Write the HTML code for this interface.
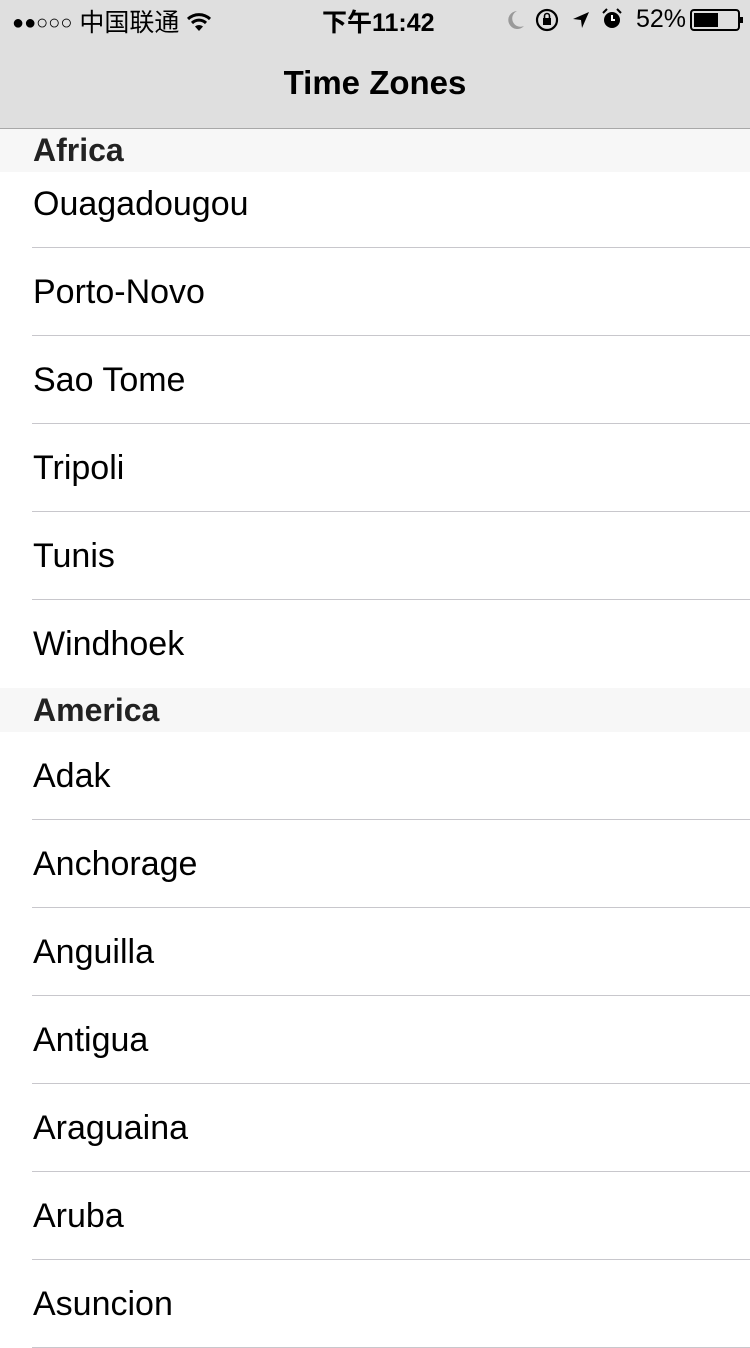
<!DOCTYPE html>
<html><head><meta charset="utf-8"><style>
*{margin:0;padding:0;box-sizing:border-box}
body{width:750px;height:1334px;overflow:hidden;background:#fff;font-family:"Liberation Sans","Noto Sans CJK SC",sans-serif;position:relative}
.nav{position:absolute;left:0;top:0;width:750px;height:129px;background:#dfdfdf;border-bottom:1px solid #a8a8a8}
.sb{position:absolute;top:3px;font-size:25px;color:#000;white-space:nowrap}
.ic{position:absolute}
.title{position:absolute;top:64px;width:750px;text-align:center;font-size:33px;font-weight:bold;color:#000}
.hdr{position:absolute;left:0;width:750px;height:44px;background:#f7f7f7;font-size:32px;font-weight:bold;color:#222;padding-left:33px;line-height:44px}
.row{position:absolute;left:0;width:750px;height:88px;font-size:34px;color:#000;padding-left:33px;line-height:88px}
.row.s::after{content:"";position:absolute;left:32px;right:0;bottom:0;height:1px;background:#c8c7cc}
</style></head><body>
<div class="row s" style="top:160px">Ouagadougou</div>
<div class="row s" style="top:248px">Porto-Novo</div>
<div class="row s" style="top:336px">Sao Tome</div>
<div class="row s" style="top:424px">Tripoli</div>
<div class="row s" style="top:512px">Tunis</div>
<div class="row" style="top:600px">Windhoek</div>
<div class="hdr" style="top:688px">America</div>
<div class="row s" style="top:732px">Adak</div>
<div class="row s" style="top:820px">Anchorage</div>
<div class="row s" style="top:908px">Anguilla</div>
<div class="row s" style="top:996px">Antigua</div>
<div class="row s" style="top:1084px">Araguaina</div>
<div class="row s" style="top:1172px">Aruba</div>
<div class="row s" style="top:1260px">Asuncion</div>
<div class="hdr" style="top:129px;height:43px;line-height:43px">Africa</div>
<div class="nav">
<div class="sb" style="left:12px"><span style="font-size:20px;vertical-align:2px">●●○○○</span> 中国联通
<svg width="26" height="20" viewBox="0 0 26 20" style="vertical-align:-1px"><path d="M2 7 A16 16 0 0 1 24 7" stroke="#000" stroke-width="3" fill="none"/><path d="M6 11 A10 10 0 0 1 20 11" stroke="#000" stroke-width="3" fill="none"/><path d="M13 19 L9 14.5 A6 6 0 0 1 17 14.5 Z" fill="#000"/></svg></div>
<div class="sb" style="left:322px;font-weight:bold;">下午11:42</div>
<svg class="ic" style="left:505px;top:9px" width="20" height="22" viewBox="0 0 20 22"><path d="M12 2 A9 9 0 1 0 19 17 A8 8 0 0 1 12 2Z" fill="#999"/></svg>
<svg class="ic" style="left:535px;top:8px" width="24" height="24" viewBox="0 0 24 24"><circle cx="12" cy="12" r="10" stroke="#000" stroke-width="2.2" fill="none"/><rect x="8" y="10" width="8" height="7" fill="#000"/><path d="M9.5 10 V8 a2.5 2.5 0 0 1 5 0 V10" stroke="#000" stroke-width="1.6" fill="none"/></svg>
<svg class="ic" style="left:571px;top:9px" width="20" height="22" viewBox="0 0 20 22"><path d="M18 3 L2 10 L10 11 L11 19 Z" fill="#000"/></svg>
<svg class="ic" style="left:601px;top:8px" width="22" height="22" viewBox="0 0 22 22"><circle cx="11" cy="12" r="8" fill="#000"/><path d="M11 7 V12 H14" stroke="#fff" stroke-width="2" fill="none"/><path d="M2 5 L6 1 M20 5 L16 1" stroke="#000" stroke-width="2"/></svg>
<div class="sb" style="left:636px;top:5px">52%</div>
<svg class="ic" style="left:690px;top:9px" width="56" height="22" viewBox="0 0 56 22"><rect x="1" y="1" width="48" height="20" rx="3" stroke="#000" stroke-width="2" fill="none"/><rect x="4" y="4" width="24" height="14" fill="#000"/><rect x="50" y="8" width="3" height="6" fill="#000"/></svg>
<div class="title">Time Zones</div>
</div>
</body></html>
